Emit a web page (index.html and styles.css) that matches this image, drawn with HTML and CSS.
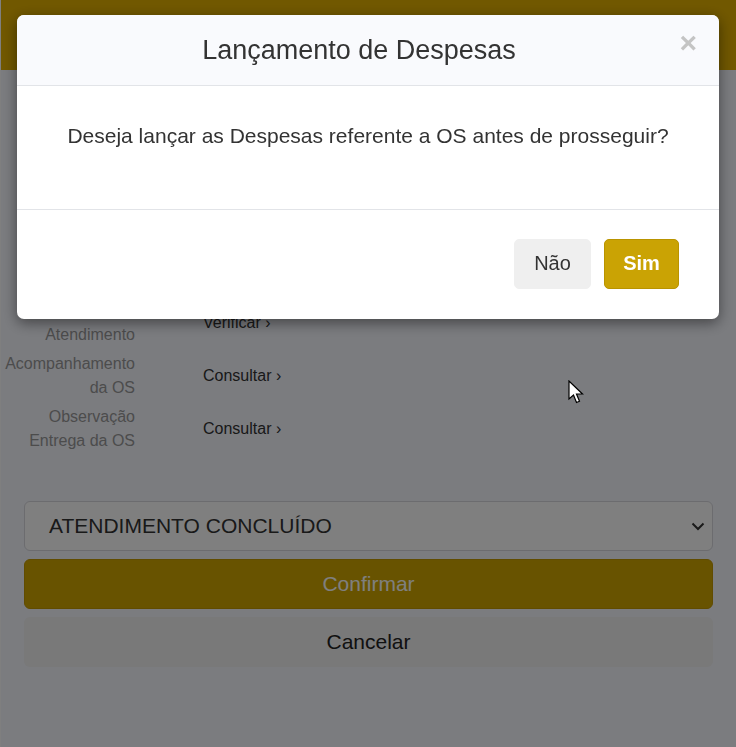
FILE: index.html
```html
<!DOCTYPE html>
<html lang="pt-BR">
<head>
    <meta charset="UTF-8">
    <meta name="viewport" content="width=device-width, initial-scale=1.0">
    <title>Lançamento de Despesas</title>
    <link rel="stylesheet" href="styles.css">
</head>
<body>
    <div class="page">
        <div class="topbar"></div>

        <div class="details">
            <div class="row">
                <div class="label">Checklist do<br>Atendimento</div>
                <div class="value">Verificar &rsaquo;</div>
            </div>
            <div class="row">
                <div class="label">Acompanhamento<br>da OS</div>
                <div class="value">Consultar &rsaquo;</div>
            </div>
            <div class="row">
                <div class="label">Observação<br>Entrega da OS</div>
                <div class="value">Consultar &rsaquo;</div>
            </div>
        </div>

        <div class="actions">
            <div class="select">
                <span>ATENDIMENTO CONCLUÍDO</span>
                <svg class="chevron" width="14" height="9" viewBox="0 0 14 9">
                    <path d="M1.5 1.5 L7 7 L12.5 1.5" fill="none" stroke="#333" stroke-width="2"/>
                </svg>
            </div>
            <button class="btn-confirm">Confirmar</button>
            <button class="btn-cancel">Cancelar</button>
        </div>
    </div>

    <div class="overlay">
        <div class="modal">
            <div class="modal-header">
                <h2 class="modal-title">Lançamento de Despesas</h2>
                <span class="close">&times;</span>
            </div>
            <div class="modal-body">
                <p>Deseja lançar as Despesas referente a OS antes de prosseguir?</p>
            </div>
            <div class="modal-footer">
                <button class="btn-no">Não</button>
                <button class="btn-yes">Sim</button>
            </div>
        </div>

        <svg class="cursor" width="16" height="26" viewBox="0 0 16 26">
            <path d="M1 1 L1 19 L5.5 15 L8.5 22.5 L11.5 21.2 L8.5 14 L14.5 14 Z" fill="#fff" stroke="#000" stroke-width="1.2" stroke-linejoin="miter"/>
        </svg>
    </div>
</body>
</html>
```

FILE: styles.css
```css
* {
    margin: 0;
    padding: 0;
    box-sizing: border-box;
}

body {
    font-family: "Liberation Sans", Arial, sans-serif;
    background: #f6f8ff;
    min-height: 100vh;
}

.page {
    min-height: 747px;
    border-left: 1px solid #ffffff;
}

.topbar {
    height: 70px;
    background: #e2b000;
}

.details {
    padding-top: 229px;
    display: flex;
    flex-direction: column;
    gap: 5px;
}

.row {
    display: grid;
    grid-template-columns: 134px 1fr;
    column-gap: 68px;
    align-items: center;
}

.label {
    text-align: right;
    font-size: 16px;
    line-height: 24px;
    color: #999;
    white-space: nowrap;
}

.value {
    font-size: 16px;
    color: #333;
}

.actions {
    margin: 48px 23px 0 23px;
    display: flex;
    flex-direction: column;
    gap: 8px;
}

.select {
    height: 50px;
    background: #fff;
    border: 1px solid #d8d8de;
    border-radius: 6px;
    padding: 0 6px 0 24px;
    display: flex;
    align-items: center;
    justify-content: space-between;
    font-size: 21px;
    color: #333;
}

.chevron {
    margin-right: 1px;
}

.btn-confirm,
.btn-cancel {
    height: 50px;
    border: none;
    border-radius: 6px;
    font-family: inherit;
    font-size: 21px;
}

.btn-confirm {
    background: #d0a600;
    color: #fff;
    border: 1px solid #c29800;
}

.btn-cancel {
    background: #f2f2f2;
    color: #222;
}

.overlay {
    position: fixed;
    inset: 0;
    background: rgba(0, 0, 0, 0.5);
}

.modal {
    margin: 15px 0 0 17px;
    width: 702px;
    background: #fff;
    border-radius: 7px;
    box-shadow: 0 4px 14px rgba(0, 0, 0, 0.45);
    overflow: hidden;
}

.modal-header {
    position: relative;
    height: 71px;
    padding-right: 18px;
    background: #f9fafd;
    border-bottom: 1px solid #e2e4e8;
    display: flex;
    align-items: center;
    justify-content: center;
}

.modal-title {
    font-weight: normal;
    font-size: 27px;
    color: #333;
    margin-top: 1px;
}

.close {
    position: absolute;
    top: 11px;
    right: 22px;
    font-size: 30px;
    font-weight: bold;
    color: #c4c4c4;
}

.modal-body {
    height: 124px;
    border-bottom: 1px solid #e2e4e8;
    padding-top: 34px;
    text-align: center;
}

.modal-body p {
    font-size: 21px;
    line-height: 32px;
    color: #333;
}

.modal-footer {
    height: 109px;
    display: flex;
    justify-content: flex-end;
    align-items: center;
    gap: 13px;
    padding: 0 40px 2px 0;
}

.btn-no,
.btn-yes {
    height: 50px;
    border-radius: 5px;
    font-family: inherit;
    font-size: 20px;
    cursor: pointer;
}

.btn-no {
    width: 77px;
    background: #efefef;
    border: 1px solid #efefef;
    color: #333;
}

.btn-yes {
    width: 75px;
    background: #caa304;
    border: 1px solid #b99400;
    color: #fff;
    font-weight: 600;
}

.cursor {
    position: absolute;
    left: 568px;
    top: 380px;
}
```
